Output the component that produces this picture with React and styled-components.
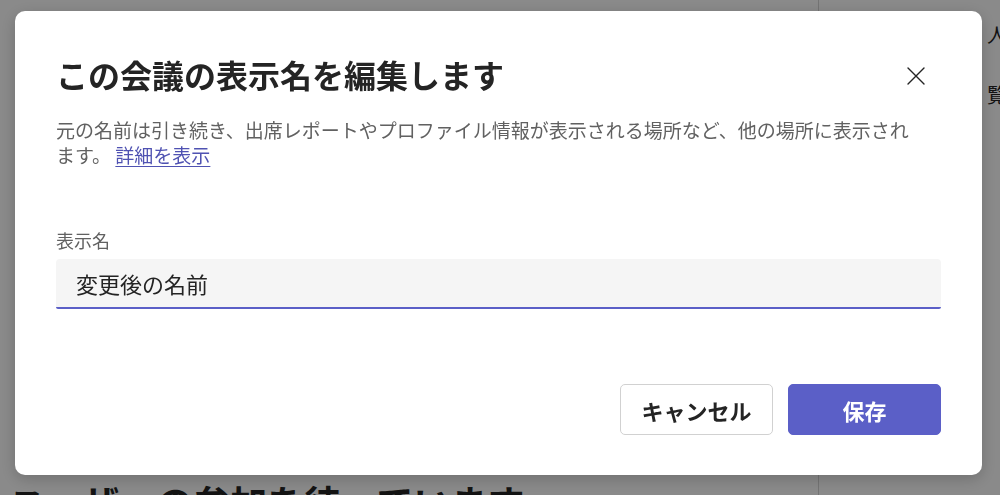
import styled, { createGlobalStyle } from "styled-components";

const GlobalStyle = createGlobalStyle`
    html, body {
        margin: 0;
        padding: 0;
        width: 1000px;
        height: 495px;
        overflow: hidden;
        background: #ffffff;
        font-family: "Noto Sans CJK JP", "Noto Sans", sans-serif;
    }

    * {
        box-sizing: border-box;
    }
`

function CloseIcon() {
    return (
        <svg width="18" height="18" viewBox="0 0 18 18" fill="none">
            <path d="M1 1L17 17M17 1L1 17" stroke="#242424" strokeWidth="1.4" strokeLinecap="round" />
        </svg>
    )
}

function App() {
    return (
        <>
            <GlobalStyle />
            <Page>
                <Main>
                    <Waiting>ユーザーの参加を待っています</Waiting>
                </Main>
                <Side>
                    <SideItem>人</SideItem>
                    <SideItem>覧</SideItem>
                </Side>
            </Page>

            <Overlay>
                <Dialog>
                    <Header>
                        <Title>この会議の表示名を編集します</Title>
                        <CloseButton aria-label="閉じる">
                            <CloseIcon />
                        </CloseButton>
                    </Header>

                    <Description>
                        元の名前は引き続き、出席レポートやプロファイル情報が表示される場所など、他の場所に表示されます。 <a href="#">詳細を表示</a>
                    </Description>

                    <Label>表示名</Label>
                    <Input defaultValue="変更後の名前" />

                    <Actions>
                        <Button>キャンセル</Button>
                        <Button primary>保存</Button>
                    </Actions>
                </Dialog>
            </Overlay>
        </>
    )
}

export default App;

const Page = styled.div`
    width: 1000px;
    height: 495px;
    display: flex;
    overflow: hidden;
`

const Main = styled.div`
    width: 818px;
    flex-shrink: 0;
    padding: 484px 0 0 9px;
`

const Waiting = styled.p`
    margin: 0;
    font-size: 37px;
    line-height: 37px;
    font-weight: 700;
    color: #242424;
    white-space: nowrap;
`

const Side = styled.div`
    flex: 1;
    border-left: 1px solid #d6d6d6;
    padding: 20px 0 0 168px;
    display: flex;
    flex-direction: column;
    gap: 30px;
`

const SideItem = styled.span`
    font-size: 20px;
    color: #242424;
    line-height: 30px;
`

const Overlay = styled.div`
    position: fixed;
    inset: 0;
    background: rgba(0, 0, 0, 0.46);
    padding: 11px 0 0 15px;
`

const Dialog = styled.div`
    width: 967px;
    height: 464px;
    background: #ffffff;
    border-radius: 10px;
    box-shadow: 0 4px 16px rgba(0, 0, 0, 0.2);
    padding: 43px 41px 40px 41px;
    display: flex;
    flex-direction: column;
`

const Header = styled.div`
    display: flex;
    align-items: center;
    justify-content: space-between;
    padding-right: 16px;
`

const Title = styled.h2`
    margin: 0;
    font-size: 32px;
    line-height: 40px;
    font-weight: 700;
    color: #242424;
`

const CloseButton = styled.button`
    border: none;
    background: none;
    padding: 0;
    width: 18px;
    height: 18px;
    margin-top: 4px;
    display: flex;
    cursor: pointer;
`

const Description = styled.p`
    margin: 23px 0 0 0;
    max-width: 866px;
    font-size: 19px;
    line-height: 25px;
    color: #616161;

    a {
        color: #4f52b2;
        text-decoration: underline;
        text-underline-offset: 3px;
    }
`

const Label = styled.label`
    margin-top: 61px;
    font-size: 18px;
    line-height: 24px;
    color: #616161;
`

const Input = styled.input`
    margin-top: 7px;
    height: 50px;
    width: 100%;
    border: none;
    border-bottom: 2px solid #5b5fc7;
    border-radius: 4px 4px 2px 2px;
    background: #f5f5f5;
    padding: 0 20px;
    font-family: inherit;
    font-size: 22px;
    color: #242424;
    outline: none;
`

const Actions = styled.div`
    margin-top: 75px;
    display: flex;
    justify-content: flex-end;
    gap: 15px;
`

const Button = styled.button`
    width: 153px;
    height: 51px;
    border-radius: 5px;
    font-family: inherit;
    font-size: 22px;
    font-weight: 700;
    cursor: pointer;
    border: 1px solid ${(p) => (p.primary ? "#5b5fc7" : "#d1d1d1")};
    background: ${(p) => (p.primary ? "#5b5fc7" : "#ffffff")};
    color: ${(p) => (p.primary ? "#ffffff" : "#242424")};
`
